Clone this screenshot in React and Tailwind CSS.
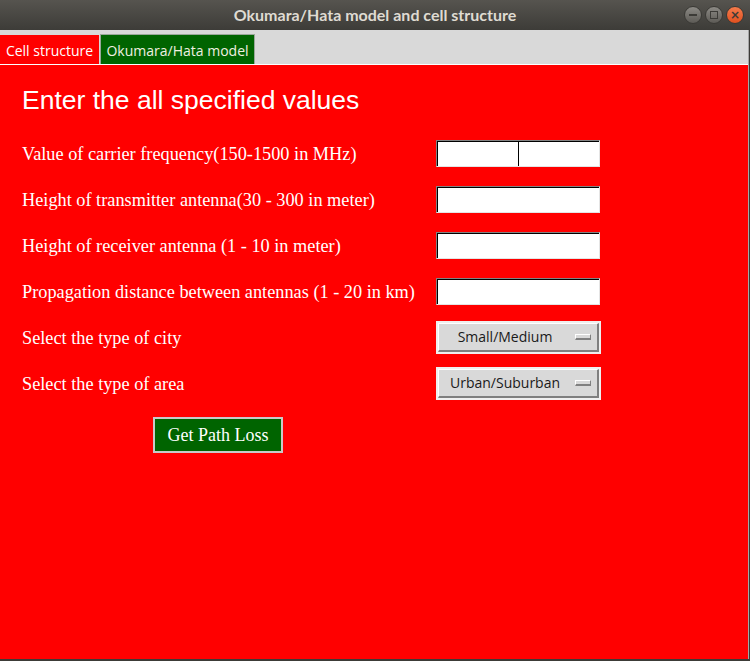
import React from 'react';

const serif = { fontFamily: '"Liberation Serif", "Times New Roman", serif' };
const ui = { fontFamily: '"Open Sans", "DejaVu Sans", sans-serif' };

const fields = [
    { label: 'Value of carrier frequency(150-1500 in MHz)', type: 'entry', caret: true },
    { label: 'Height of transmitter antenna(30 - 300 in meter)', type: 'entry' },
    { label: 'Height of receiver antenna (1 - 10 in meter)', type: 'entry' },
    { label: 'Propagation distance between antennas (1 - 20 in km)', type: 'entry' },
    { label: 'Select the type of city', type: 'menu', value: 'Small/Medium' },
    { label: 'Select the type of area', type: 'menu', value: 'Urban/Suburban' },
];

const Entry = ({ caret }) => (
    <div className="w-[164px] h-[27px] border-t border-l border-b border-r border-t-[#828282] border-l-[#828282] border-b-[#e4e4e4] border-r-[#e4e4e4]">
        <div className="h-full bg-white border-t border-l border-black flex">
            {caret && <div className="ml-[80px] w-px h-full bg-black" />}
        </div>
    </div>
);

const OptionMenu = ({ value }) => (
    <div className="w-[165px] h-[33px] border-2 border-[#efefef]">
        <div className="h-full bg-[#d9d9d9] border-t border-l border-white border-b-2 border-r-2 border-b-[#7f7f7f] border-r-[#7f7f7f] flex items-center">
            <span className="flex-1 text-center text-[14px] text-[#1a1a1a] pr-[4px]" style={ui}>
                {value}
            </span>
            <div className="w-[16px] h-[6px] mr-[6px] bg-[#d9d9d9] border-t border-l border-white border-b-2 border-r border-b-[#808080] border-r-[#808080]" />
        </div>
    </div>
);

const App = () => {
    return (
        <div className="w-[750px] h-[661px] flex flex-col bg-[#3c3b37] overflow-hidden">
            {/* window title bar */}
            <div className="h-[30px] shrink-0 relative flex items-center justify-center bg-gradient-to-b from-[#56544f] to-[#3d3c38]">
                <span className="text-[16px] font-bold text-[#dfdbd2]" style={{ fontFamily: 'Lato, "DejaVu Sans", sans-serif' }}>
                    Okumara/Hata model and cell structure
                </span>
                <div className="absolute right-[6px] top-[6px] flex gap-[3px]">
                    <div className="w-[18px] h-[18px] rounded-full bg-gradient-to-b from-[#8c8a85] to-[#5d5b56] border border-[#3a3935] flex items-center justify-center">
                        <div className="w-[8px] h-[2px] bg-[#3c3b37]" />
                    </div>
                    <div className="w-[18px] h-[18px] rounded-full bg-gradient-to-b from-[#8c8a85] to-[#5d5b56] border border-[#3a3935] flex items-center justify-center">
                        <div className="w-[8px] h-[8px] border border-[#3c3b37]" />
                    </div>
                    <div className="w-[18px] h-[18px] rounded-full bg-gradient-to-b from-[#f47a4a] to-[#e0501e] border border-[#3a3935] flex items-center justify-center text-[#3c3b37] text-[12px] font-bold leading-none" style={{ fontFamily: '"DejaVu Sans", sans-serif' }}>
                        ×
                    </div>
                </div>
            </div>

            <div className="flex-1 flex min-h-0">
                <div className="flex-1 flex flex-col">
                    {/* notebook tabs */}
                    <div className="h-[34px] shrink-0 bg-[#d9d9d9] flex items-end text-[14px]" style={ui}>
                        <div className="w-[99px] h-[29px] pt-[1px] bg-[#ff0000] text-white flex items-center justify-center">Cell structure</div>
                        <div className="ml-px w-[155px] h-[30px] pt-[1px] bg-[#006400] text-[#f0f0e0] border-t border-l border-r border-[#9aa79a] flex items-center justify-center">
                            Okumara/Hata model
                        </div>
                    </div>
                    <div className="h-px bg-white shrink-0" />

                    {/* tab content */}
                    <div className="flex-1 bg-[#ff0000] px-[22px]">
                        <h1 className="mt-[20px] text-[26.5px] leading-[30px] text-white" style={{ fontFamily: '"Liberation Sans", Arial, sans-serif' }}>
                            Enter the all specified values
                        </h1>
                        <div className="mt-[15px] flex flex-col">
                            {fields.map((f) => (
                                <div key={f.label} className="h-[46px] flex items-center">
                                    <span className="w-[414px] pt-[3px] text-[18.3px] text-white" style={serif}>
                                        {f.label}
                                    </span>
                                    {f.type === 'entry' ? <Entry caret={f.caret} /> : <OptionMenu value={f.value} />}
                                </div>
                            ))}
                        </div>
                        <button
                            className="mt-[11px] ml-[131px] w-[130px] h-[36px] bg-[#006400] border-2 border-[#c9c9c9] text-white text-[18px]"
                            style={serif}
                        >
                            Get Path Loss
                        </button>
                    </div>
                </div>
                <div className="w-[2px] shrink-0 border-l border-[#a6a6a6] bg-[#3c3b37]" />
            </div>
            <div className="h-[2px] shrink-0 bg-[#3c3b37]" />
        </div>
    );
};

export default App;
